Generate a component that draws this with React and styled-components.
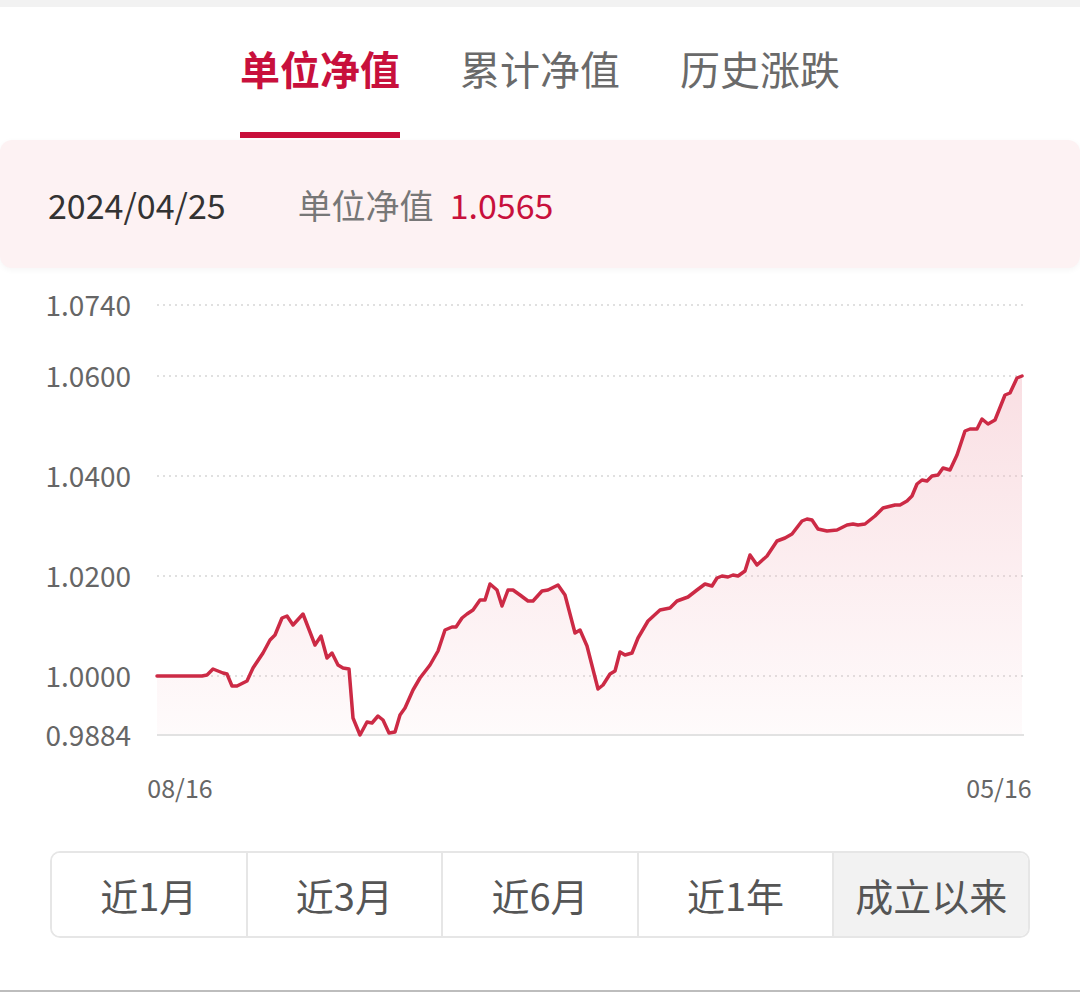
import React from 'react';
import styled, { createGlobalStyle } from 'styled-components';

const GlobalStyle = createGlobalStyle`
  body {
    margin: 0;
    background: #ffffff;
    font-family: "Noto Sans CJK SC", "Noto Sans", sans-serif;
  }
`;

const Page = styled.div`
  width: 1080px;
  height: 992px;
  display: flex;
  flex-direction: column;
  overflow: hidden;
`;

const TopStrip = styled.div`
  height: 7px;
  background: #f2f2f2;
`;

const TabBar = styled.div`
  height: 131px;
  display: flex;
  justify-content: center;
  gap: 60px;
`;

const Tab = styled.div`
  display: flex;
  align-items: center;
  font-size: 40px;
  font-weight: ${p => (p.active ? 700 : 400)};
  color: ${p => (p.active ? '#c8103c' : '#6a6a6a')};
  border-bottom: 6px solid ${p => (p.active ? '#c8103c' : 'transparent')};
  padding-bottom: 4px;
`;

const InfoBar = styled.div`
  margin-top: 2px;
  height: 128px;
  background: #fdf2f3;
  border-radius: 12px;
  box-shadow: 0 2px 6px rgba(0, 0, 0, 0.04);
  display: flex;
  align-items: center;
  padding-left: 48px;
  font-size: 34px;
`;

const DateText = styled.span`
  color: #333333;
  margin-right: 72px;
`;

const Label = styled.span`
  color: #777777;
`;

const Value = styled.span`
  color: #c8103c;
  margin-left: 16px;
`;

const Chart = styled.svg`
  display: block;
  width: 1080px;
  height: 560px;
`;

const RangeBar = styled.div`
  margin: 23px 50px 0;
  height: 83px;
  border: 2px solid #e6e6e6;
  border-radius: 10px;
  overflow: hidden;
  display: flex;
`;

const RangeItem = styled.div`
  flex: 1;
  display: flex;
  align-items: center;
  justify-content: center;
  font-size: 38px;
  color: #555555;
  background: ${p => (p.active ? '#f2f2f2' : '#ffffff')};
  & + & {
    border-left: 2px solid #e6e6e6;
  }
`;

const BottomLine = styled.div`
  margin-top: auto;
  height: 2px;
  background: #bdbdbd;
`;

const pts = [
  [157, 678], [202, 678], [207, 677], [213, 671], [223, 675], [227, 676], [232, 688], [237, 688],
  [247, 683], [253, 670], [263, 655], [270, 642], [275, 637], [282, 620], [287, 618], [293, 627],
  [303, 616], [315, 647], [321, 638], [327, 660], [332, 655], [338, 667], [343, 670], [349, 671],
  [353, 720], [360, 737], [367, 724], [372, 725], [378, 718], [383, 722], [389, 735], [395, 734],
  [400, 717], [405, 710], [413, 692], [420, 680], [430, 667], [438, 653], [445, 632], [452, 629],
  [456, 629], [462, 620], [467, 616], [473, 612], [480, 602], [485, 602], [490, 586], [497, 592],
  [502, 608], [508, 592], [513, 592], [520, 597], [528, 603], [533, 603], [542, 593], [548, 592],
  [558, 587], [565, 597], [575, 635], [580, 632], [587, 648], [598, 691], [603, 687], [610, 676],
  [615, 673], [620, 654], [625, 657], [632, 655], [638, 640], [648, 623], [660, 612], [670, 610],
  [677, 603], [688, 599], [697, 592], [705, 586], [712, 588], [717, 580], [722, 578], [728, 579],
  [733, 577], [738, 578], [745, 573], [750, 557], [757, 567], [767, 558], [777, 543], [785, 540],
  [792, 536], [802, 523], [807, 521], [812, 522], [818, 531], [827, 533], [837, 532], [847, 527],
  [853, 526], [858, 527], [865, 526], [875, 518], [883, 510], [895, 507], [900, 507], [907, 503],
  [912, 498], [917, 486], [922, 482], [927, 483], [932, 478], [938, 477], [943, 470], [950, 472],
  [957, 457], [965, 433], [970, 431], [977, 431], [982, 421], [988, 426], [995, 422], [1005, 397],
  [1010, 395], [1017, 380], [1022, 378],
];

const grid = [
  { y: 307, label: '1.0740' },
  { y: 378, label: '1.0600' },
  { y: 478, label: '1.0400' },
  { y: 578, label: '1.0200' },
  { y: 678, label: '1.0000' },
];

const BASE = 737;
const linePath = pts.map((p, i) => `${i ? 'L' : 'M'}${p[0]},${p[1]}`).join(' ');
const areaPath = `${linePath} L1022,${BASE} L157,${BASE} Z`;

const tabs = ['单位净值', '累计净值', '历史涨跌'];
const ranges = ['近1月', '近3月', '近6月', '近1年', '成立以来'];

const axisFont = 'Noto Sans CJK SC, sans-serif';

export default function App() {
  return (
    <Page>
      <GlobalStyle />
      <TopStrip />
      <TabBar>
        {tabs.map((t, i) => (
          <Tab key={t} active={i === 0}>{t}</Tab>
        ))}
      </TabBar>
      <InfoBar>
        <DateText>2024/04/25</DateText>
        <Label>单位净值</Label>
        <Value>1.0565</Value>
      </InfoBar>
      <Chart viewBox="0 270 1080 560">
        <defs>
          <linearGradient id="fill" x1="0" y1="378" x2="0" y2={BASE} gradientUnits="userSpaceOnUse">
            <stop offset="0" stopColor="#f3b8c1" stopOpacity="0.45" />
            <stop offset="1" stopColor="#f3b8c1" stopOpacity="0.06" />
          </linearGradient>
        </defs>
        {grid.map(g => (
          <g key={g.label}>
            <line x1="157" x2="1024" y1={g.y} y2={g.y} stroke="#d6d6d6" strokeWidth="1.5" strokeDasharray="2 4" />
            <text x="131" y={g.y + 11} textAnchor="end" fontSize="28" fill="#666666" fontFamily={axisFont}>
              {g.label}
            </text>
          </g>
        ))}
        <path d={areaPath} fill="url(#fill)" />
        <line x1="157" x2="1024" y1={BASE} y2={BASE} stroke="#e2e2e2" strokeWidth="2" />
        <text x="131" y={BASE + 11} textAnchor="end" fontSize="28" fill="#666666" fontFamily={axisFont}>
          0.9884
        </text>
        <path d={linePath} fill="none" stroke="#cc2a45" strokeWidth="3.5" strokeLinejoin="round" strokeLinecap="round" />
        <text x="180" y="800" textAnchor="middle" fontSize="25" fill="#666666" fontFamily={axisFont}>
          08/16
        </text>
        <text x="999" y="800" textAnchor="middle" fontSize="25" fill="#666666" fontFamily={axisFont}>
          05/16
        </text>
      </Chart>
      <RangeBar>
        {ranges.map((r, i) => (
          <RangeItem key={r} active={i === ranges.length - 1}>{r}</RangeItem>
        ))}
      </RangeBar>
      <BottomLine />
    </Page>
  );
}
